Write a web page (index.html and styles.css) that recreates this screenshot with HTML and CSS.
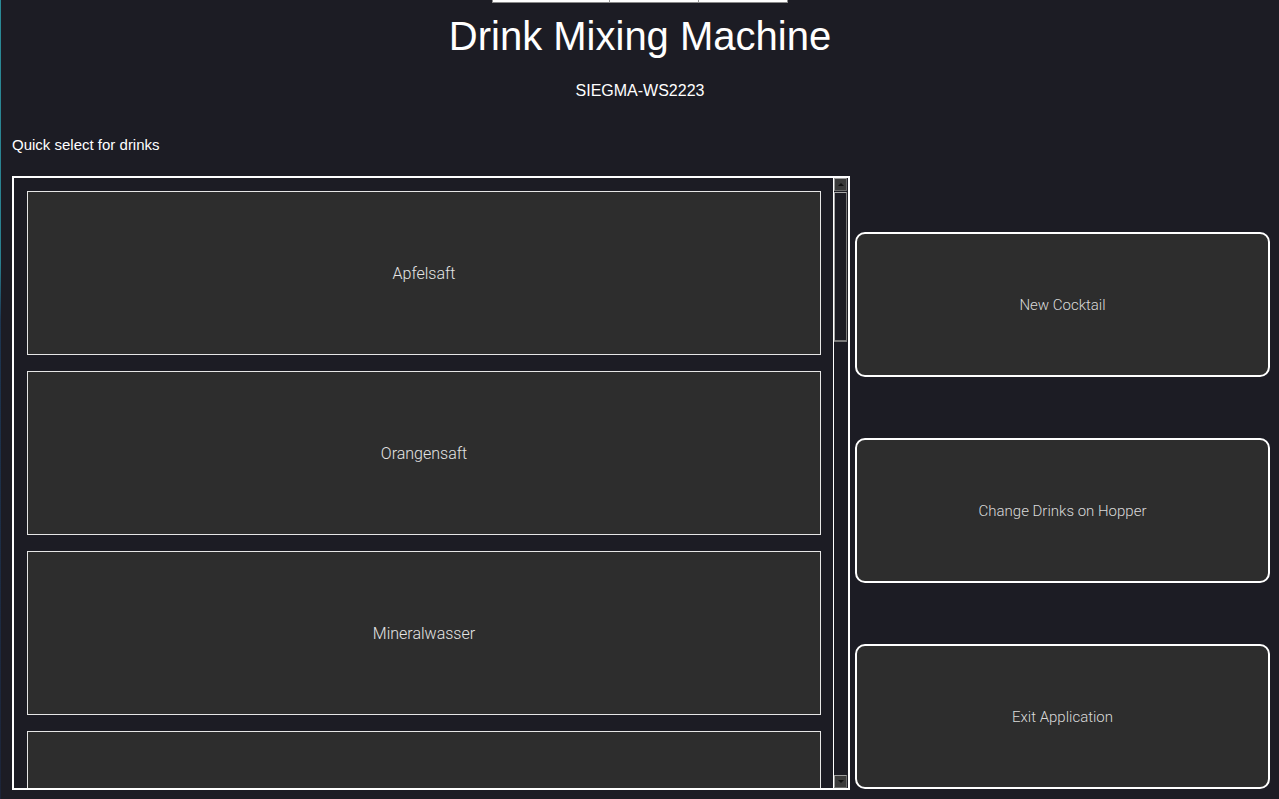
FILE: index.html
```html
<!DOCTYPE html>
<html lang="en">
<head>
<meta charset="utf-8">
<title>Drink Mixing Machine</title>
<link rel="stylesheet" href="styles.css">
</head>
<body>
<div class="topbar">
  <span class="seg seg-a"></span><span class="seg seg-b"></span><span class="seg seg-c"></span>
</div>
<h1 class="title">Drink Mixing Machine</h1>
<p class="subtitle">SIEGMA-WS2223</p>
<p class="label">Quick select for drinks</p>
<main class="main">
  <section class="box">
    <div class="list">
      <button class="item">Apfelsaft</button>
      <button class="item">Orangensaft</button>
      <button class="item">Mineralwasser</button>
      <button class="item"></button>
    </div>
    <div class="scrollbar">
      <div class="sb-btn"><span class="tri tri-up"></span></div>
      <div class="sb-thumb"></div>
      <div class="sb-fill"></div>
      <div class="sb-btn"><span class="tri tri-down"></span></div>
    </div>
  </section>
  <section class="actions">
    <button class="action">New Cocktail</button>
    <button class="action">Change Drinks on Hopper</button>
    <button class="action">Exit Application</button>
  </section>
</main>
</body>
</html>
```
FILE: styles.css
```css
html, body {
  margin: 0;
  padding: 0;
  height: 100%;
}
body {
  background: #1c1c24;
  color: #ffffff;
  font-family: "Liberation Sans", Arial, sans-serif;
  border-left: 1px solid #2a7f8f;
  border-image: linear-gradient(to bottom, #2a8a96 0%, #2a7f8f 33%, #1d3550 40%, #1c2438 100%) 1;
  overflow: hidden;
}
.topbar {
  display: flex;
  width: 296px;
  height: 3px;
  margin-left: 491px;
  box-sizing: border-box;
}
.seg {
  display: block;
  height: 3px;
  background: #ffffff;
  border-bottom: 1px solid #8a8a8a;
  box-sizing: border-box;
}
.seg-a { width: 118px; border-left: 1px solid #8a8a8a; border-right: 1px solid #9a9a9a; }
.seg-b { width: 89px; border-right: 1px solid #9a9a9a; }
.seg-c { width: 89px; border-right: 1px solid #8a8a8a; }

.title {
  margin: 10px 0 0;
  font-size: 40px;
  line-height: 46px;
  font-weight: normal;
  text-align: center;
}
.subtitle {
  margin: 23px 0 0;
  font-size: 16px;
  line-height: 18px;
  text-align: center;
}
.label {
  margin: 36px 0 0 11px;
  font-size: 15px;
  line-height: 17px;
}
.main {
  display: flex;
  margin: 23px 9px 0 11px;
  gap: 5px;
  height: 614px;
}
.box {
  display: flex;
  width: 838px;
  height: 614px;
  border: 2px solid #ffffff;
  box-sizing: border-box;
}
.list {
  flex: 1;
  display: flex;
  flex-direction: column;
  gap: 16px;
  padding: 13px 12px 0 13px;
  overflow: hidden;
}
.item {
  flex: 0 0 164px;
  height: 164px;
  background: #2d2d2d;
  border: 1px solid #e6e6e6;
  color: #e4e4e4;
  font-family: Roboto, "Liberation Sans", sans-serif;
  font-size: 16px;
  font-weight: 300;
  padding: 0;
  margin: 0;
}
.scrollbar {
  width: 14px;
  border-left: 1px solid #ffffff;
  display: flex;
  flex-direction: column;
}
.sb-btn {
  width: 13px;
  height: 13px;
  box-sizing: border-box;
  border: 1px solid #9c9c9c;
  border-right-color: #6a6a6a;
  border-bottom-color: #6a6a6a;
  background: #3a3a3a;
  display: flex;
  align-items: center;
  justify-content: center;
}
.tri {
  width: 0;
  height: 0;
  border-left: 3px solid transparent;
  border-right: 3px solid transparent;
}
.tri-up { border-bottom: 3px solid #111; }
.tri-down { border-top: 3px solid #111; }
.sb-thumb {
  margin-top: 1px;
  width: 13px;
  height: 150px;
  box-sizing: border-box;
  border: 1px solid #a8a8a8;
  border-bottom: 2px solid #7a7a7a;
  border-right-color: #7a7a7a;
}
.sb-fill {
  flex: 1;
}
.actions {
  flex: 1;
  display: flex;
  flex-direction: column;
  justify-content: flex-end;
  gap: 61px;
  padding-bottom: 1px;
}
.action {
  flex: 0 0 145px;
  height: 145px;
  background: #2d2d2d;
  border: 2px solid #ffffff;
  border-radius: 10px;
  color: #dadada;
  font-family: Roboto, "Liberation Sans", sans-serif;
  font-size: 15px;
  font-weight: 300;
  padding: 0;
  margin: 0;
}
```
